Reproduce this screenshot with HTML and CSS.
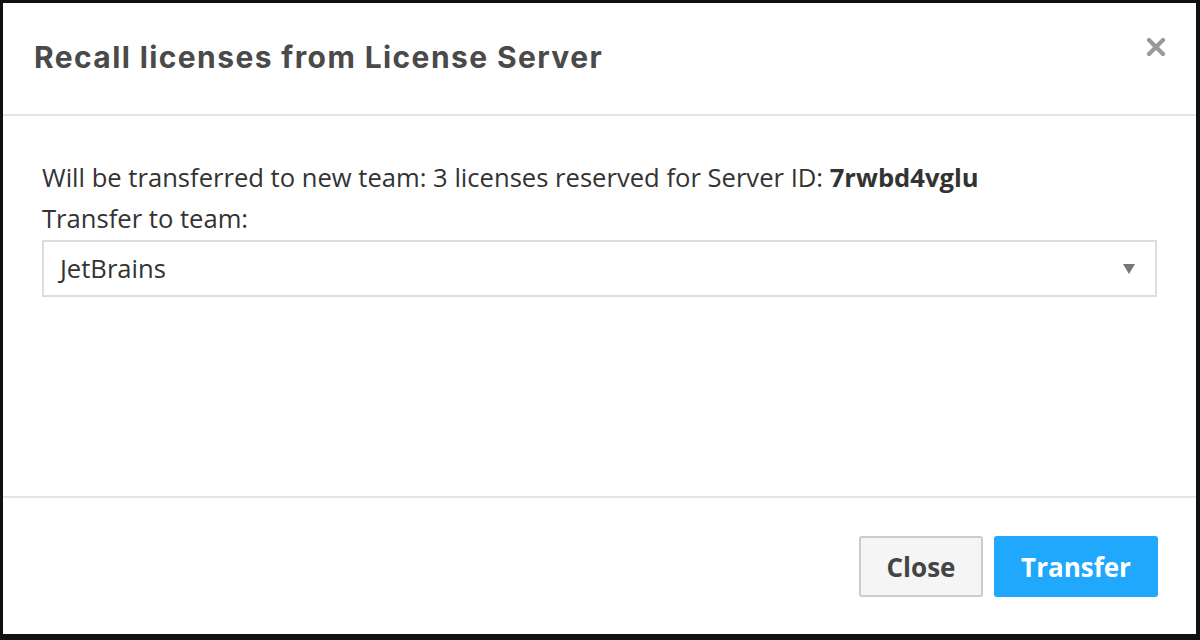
FILE: index.html
```html
<!DOCTYPE html>
<html>
<head>
<meta charset="utf-8">
<link rel="stylesheet" href="styles.css">
</head>
<body>
<div class="dialog">
  <div class="header">
    <h1 class="title">Recall licenses from License Server</h1>
    <svg class="close-x" width="18" height="18" viewBox="0 0 18 18"><path d="M2 2 L16 16 M16 2 L2 16" stroke="#999" stroke-width="4.2" stroke-linecap="square"/></svg>
  </div>
  <div class="body">
    <p class="line">Will be transferred to new team: 3 licenses reserved for Server ID: <b>7rwbd4vglu</b></p>
    <p class="line">Transfer to team:</p>
    <div class="select">
      <span>JetBrains</span>
      <svg class="arrow" width="12" height="10" viewBox="0 0 12 10"><polygon points="0,0 12,0 6,10" fill="#777"/></svg>
    </div>
  </div>
  <div class="footer">
    <button class="btn btn-close">Close</button>
    <button class="btn btn-primary">Transfer</button>
  </div>
</div>
</body>
</html>
```

FILE: styles.css
```css
html, body { margin: 0; padding: 0; }
body {
  width: 1200px;
  height: 640px;
  background: #111;
  box-sizing: border-box;
  padding: 3px 4px 6px 3px;
  font-family: "Open Sans", "Liberation Sans", sans-serif;
}
.dialog {
  background: #fff;
  height: 631px;
  display: flex;
  flex-direction: column;
}
.header {
  height: 113px;
  box-sizing: border-box;
  border-bottom: 2px solid #e5e5e5;
  display: flex;
  align-items: center;
  justify-content: space-between;
  padding: 0 31px 4px 31px;
}
.title {
  margin: 0;
  font-family: "Inter", "Liberation Sans", sans-serif;
  font-weight: 700;
  font-size: 30px;
  color: #4a4a4a;
  letter-spacing: 1.4px;
}
.close-x {
  display: block;
  align-self: flex-start;
  margin-top: 35px;
}
.body {
  flex: 1;
  padding: 41px 39px 0 39px;
}
.line {
  margin: 0;
  font-size: 25.6px;
  line-height: 41px;
  color: #333;
}
.line b { font-weight: 700; }
.select {
  margin-top: 1px;
  height: 57px;
  box-sizing: border-box;
  border: 2px solid #ddd;
  display: flex;
  align-items: center;
  justify-content: space-between;
  padding: 0 20px 0 16px;
  font-size: 25.6px;
  color: #333;
}
.footer {
  height: 138px;
  border-top: 2px solid #e5e5e5;
  display: flex;
  justify-content: flex-end;
  align-items: flex-start;
  gap: 11px;
  padding: 38px 38px 0 0;
  box-sizing: border-box;
}
.btn {
  height: 61px;
  border-radius: 3px;
  font-family: "Open Sans", "Liberation Sans", sans-serif;
  font-weight: 700;
  font-size: 26px;
  cursor: pointer;
}
.btn-close {
  width: 124px;
  background: #f5f5f5;
  border: 2px solid #ccc;
  color: #444;
}
.btn-primary {
  width: 164px;
  background: #1fa8fc;
  border: none;
  color: #fff;
}
```
